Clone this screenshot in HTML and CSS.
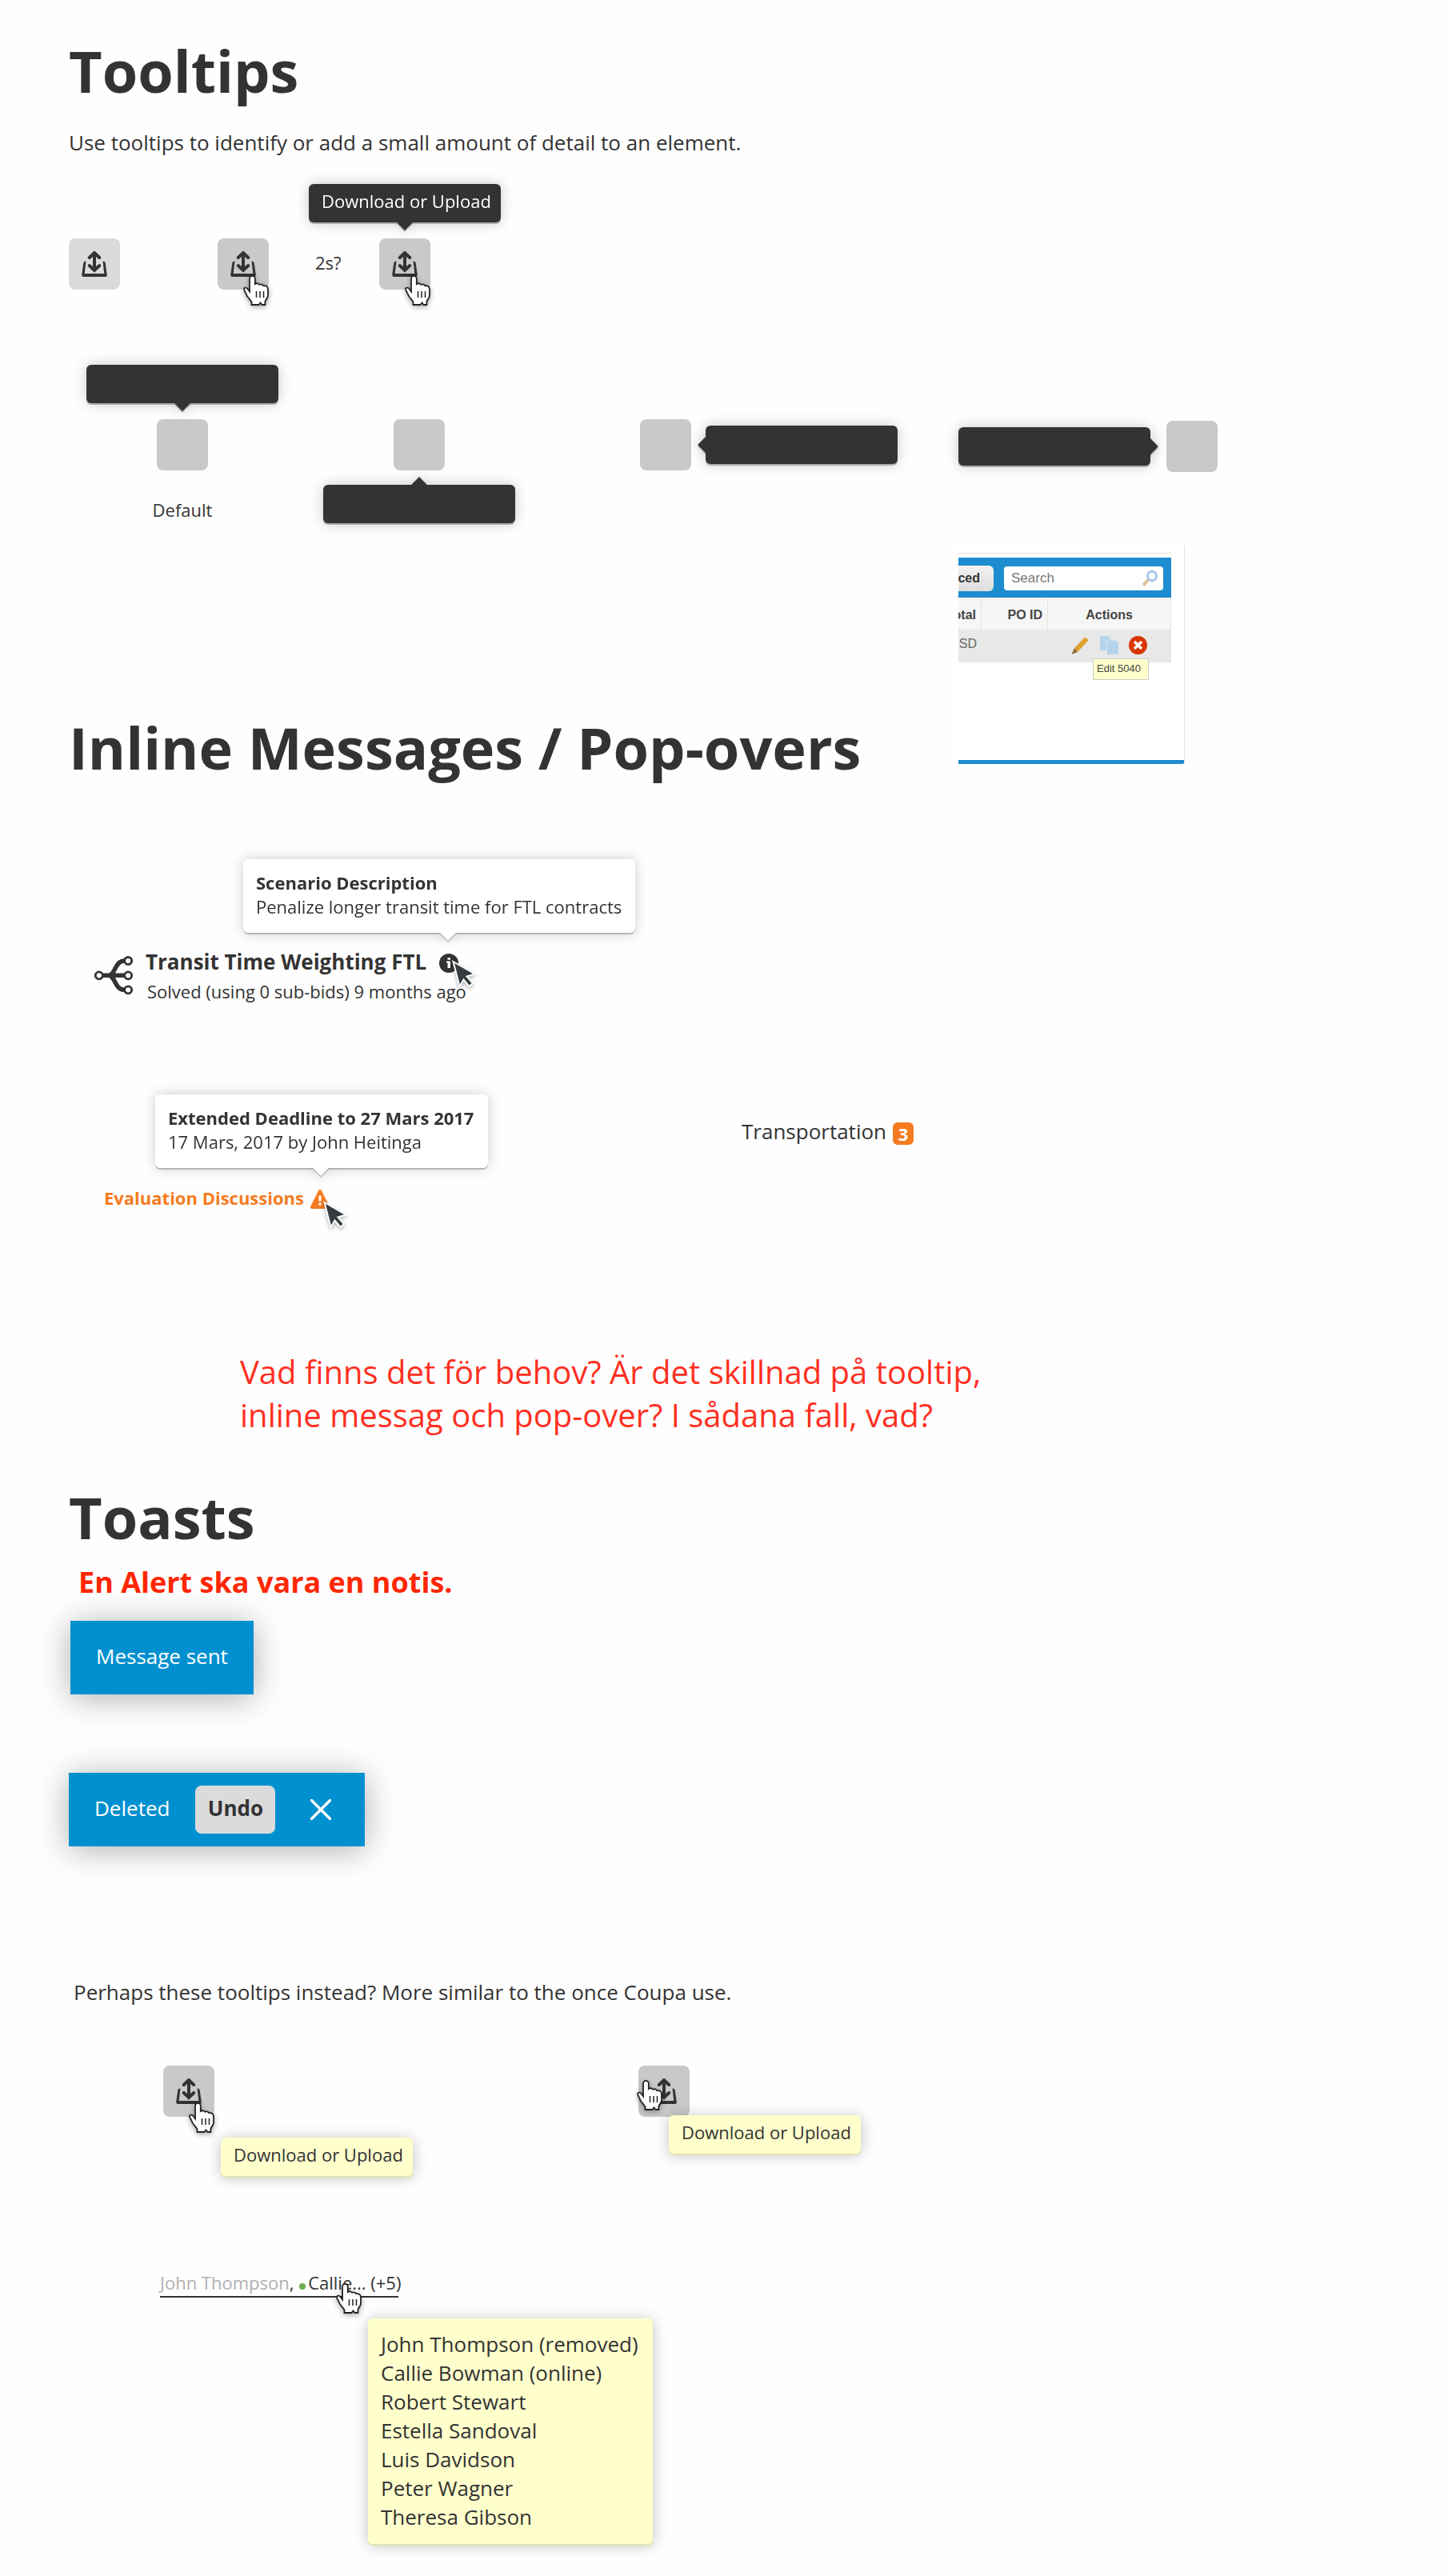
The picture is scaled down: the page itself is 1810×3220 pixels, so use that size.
FILE: index.html
```html
<!DOCTYPE html>
<html lang="en">
<head>
<meta charset="utf-8">
<meta name="viewport" content="width=device-width, initial-scale=1">
<title>Tooltips, pop-overs and toasts</title>
<link rel="stylesheet" href="styles.css">
</head>
<body>
<svg class="sprite" aria-hidden="true">
  <symbol id="transfer" viewBox="0 0 32 32">
    <path d="M16 3V24M9.800 8L16 2L22.200 8M9.800 18L16 24L22.200 18" fill="none" stroke="#333" stroke-width="4" stroke-linecap="round"/>
    <path d="M5.500 12.500C3.200 12.500 2.400 13.500 2.100 16L.2 29.500Q0 32 2.600 32H29.400Q32 32 31.800 29.500L29.900 16C29.600 13.500 28.800 12.500 26.500 12.500L28.300 28H3.700Z" fill="#333"/>
  </symbol>
  <symbol id="hand" viewBox="0 0 32 38">
    <path d="M8 4.300a3.400 3.400 0 0 1 6.800 0V11c2-1.300 4.500-.8 5.400 .8c2-.9 4-.2 5 1.400c3-.5 5.600 .8 5.800 4V25.500c0 3-3.600 5.500-3.600 8V37H23.500L21.500 34.500L19.500 37H10.500V33.500C8.500 29.500 5 28 3.500 23C2.500 20.500 1 19.500 1 17.500C1 15.300 4 15 5.500 17L8 20.500Z" fill="#fff" stroke="#222" stroke-width="1.800"/>
    <path d="M16.500 20v8M21 20v8M25.500 20v8" stroke="#222" stroke-width="1.500"/>
  </symbol>
  <symbol id="arrow" viewBox="0 0 32 36">
    <path d="M1.500 2L28.500 17.500L18.500 20.500L26 29L21.500 33L14.500 24.500L9.500 33Z" fill="#353c40" stroke="#fff" stroke-width="2"/>
  </symbol>
</svg>

<div class="page">
  <main class="guide">
    <h1>Tooltips</h1>
    <p class="lead">Use tooltips to identify or add a small amount of detail to an element.</p>

    <div class="sequence">
      <button class="icon-button" type="button" aria-label="Download or Upload"><svg class="glyph"><use href="#transfer"/></svg></button>
      <div class="anchor">
        <button class="icon-button is-hover" type="button" aria-label="Download or Upload"><svg class="glyph"><use href="#transfer"/></svg></button>
        <svg class="hand"><use href="#hand"/></svg>
      </div>
      <span class="small delay">2s?</span>
      <div class="anchor">
        <button class="icon-button is-hover" type="button" aria-label="Download or Upload"><svg class="glyph"><use href="#transfer"/></svg></button>
        <svg class="hand"><use href="#hand"/></svg>
        <div class="tooltip point-down over" role="tooltip">Download or Upload</div>
      </div>
    </div>

    <div class="placements">
      <div class="placement">
        <div class="tooltip point-down"></div>
        <div class="target"></div>
        <span class="small">Default</span>
      </div>
      <div class="placement below">
        <div class="target"></div>
        <div class="tooltip point-up"></div>
      </div>
      <div class="placement beside">
        <div class="target"></div>
        <div class="tooltip point-left"></div>
      </div>
    </div>

    <h1 class="inline-title">Inline Messages / Pop-overs</h1>

    <div class="popover scenario-popover">
      <strong>Scenario Description</strong>
      <span>Penalize longer transit time for FTL contracts</span>
    </div>
    <div class="scenario">
      <svg class="branch" viewBox="0 0 48 48" fill="none" stroke="#333" aria-hidden="true">
        <path d="M10 24.300H38M18 24.300C27 23 25 6 38 6M18 24.300C27 26 25 42.300 38 42.300" stroke-width="5.600"/>
        <g fill="#fff" stroke-width="2.800"><circle cx="5.800" cy="24.300" r="4.500"/><circle cx="42.200" cy="6" r="4.500"/><circle cx="42.200" cy="24.300" r="4.500"/><circle cx="42.200" cy="42.300" r="4.500"/></g>
      </svg>
      <div class="scenario-text">
        <div class="scenario-title">
          <strong>Transit Time Weighting FTL</strong>
          <span class="hint hint-info">
            <svg viewBox="0 0 24 24" aria-hidden="true"><circle cx="12" cy="12" r="12" fill="#333"/><path d="M10.500 5H14V7.800H10.500ZM9 9.500H14V18H10.500V11.500H9Z" fill="#fff"/></svg>
            <svg class="arrow"><use href="#arrow"/></svg>
          </span>
        </div>
        <span class="small">Solved (using 0 sub-bids) 9 months ago</span>
      </div>
    </div>

    <div class="notices">
      <div>
        <div class="popover deadline-popover">
          <strong>Extended Deadline to 27 Mars 2017</strong>
          <span>17 Mars, 2017 by John Heitinga</span>
        </div>
        <div class="status">
          <strong>Evaluation Discussions</strong>
          <span class="hint hint-warning">
            <svg viewBox="0 0 24 24" aria-hidden="true"><path d="M12 2L22 22H2Z" fill="#f47b20" stroke="#f47b20" stroke-width="4" stroke-linejoin="round"/><path d="M12 7.500V14.500M12 16.500V19.500" stroke="#fff" stroke-width="3"/></svg>
            <svg class="arrow"><use href="#arrow"/></svg>
          </span>
        </div>
      </div>
      <div class="category">Transportation <span class="count">3</span></div>
    </div>

    <p class="question" lang="sv">Vad finns det för behov? Är det skillnad på tooltip,<br>inline messag och pop-over? I sådana fall, vad?</p>

    <h1 class="toast-title">Toasts</h1>
    <p class="remark" lang="sv">En Alert ska vara en notis.</p>
    <div class="toast toast-sent" role="status">Message sent</div>
    <div class="toast toast-deleted" role="status">
      <span>Deleted</span>
      <button class="undo" type="button">Undo</button>
      <button class="close" type="button" aria-label="Close"><svg viewBox="0 0 26 26"><path d="M1.500 1.500L24.500 24.500M24.500 1.500L1.500 24.500" stroke="#fff" stroke-width="3.400" stroke-linecap="round"/></svg></button>
    </div>

    <p class="alternative">Perhaps these tooltips instead? More similar to the once Coupa use.</p>
    <div class="alternatives">
      <div class="anchor">
        <button class="icon-button is-hover" type="button" aria-label="Download or Upload"><svg class="glyph"><use href="#transfer"/></svg></button>
        <svg class="hand"><use href="#hand"/></svg>
        <div class="tooltip note note-far" role="tooltip">Download or Upload</div>
      </div>
      <div class="anchor">
        <button class="icon-button is-hover" type="button" aria-label="Download or Upload"><svg class="glyph"><use href="#transfer"/></svg></button>
        <svg class="hand hand-left"><use href="#hand"/></svg>
        <div class="tooltip note note-near" role="tooltip">Download or Upload</div>
      </div>
    </div>

    <div class="recipients"><span><span class="removed">John Thompson</span>, <i class="online"></i>Callie... (+5)</span>
      <svg class="hand hand-text"><use href="#hand"/></svg>
    </div>
    <ul class="people">
      <li>John Thompson (removed)</li>
      <li>Callie Bowman (online)</li>
      <li>Robert Stewart</li>
      <li>Estella Sandoval</li>
      <li>Luis Davidson</li>
      <li>Peter Wagner</li>
      <li>Theresa Gibson</li>
    </ul>
  </main>

  <aside class="side">
    <div class="placement before">
      <div class="tooltip point-right"></div>
      <div class="target"></div>
    </div>
    <div class="legacy">
      <div class="legacy-bar">
        <button class="advanced" type="button">Advanced</button>
        <div class="search">
          <input type="text" placeholder="Search" aria-label="Search">
          <svg viewBox="0 0 20 20" aria-hidden="true"><path d="M8 12L2 18.500" stroke="#e6bd93" stroke-width="4"/><circle cx="13" cy="7" r="5.700" fill="#f4f8ff" stroke="#9dbbe6" stroke-width="2.400"/></svg>
        </div>
      </div>
      <div class="legacy-body">
        <table>
          <thead><tr><th>Total</th><th>PO ID</th><th class="actions-head">Actions</th></tr></thead>
          <tbody><tr><td>USD</td><td></td><td>
            <div class="actions">
              <svg viewBox="0 0 23 23" aria-hidden="true"><path d="M4 15L17 1.500L22 5L8 20Z" fill="#e0a030"/><path d="M4 15L8 20L.5 23Z" fill="#8a6a3a"/></svg>
              <svg viewBox="0 0 23 23" aria-hidden="true"><path d="M0 0H11L14 4V18H0Z" fill="#b3d4ec"/><path d="M8.500 5H20L23.500 9V23.500H8.500Z" fill="#b3d4ec" stroke="#e8e8e8"/></svg>
              <svg viewBox="0 0 23 23" aria-hidden="true"><circle cx="11.500" cy="11.500" r="11.500" fill="#d93600"/><path d="M7 7L16 16M16 7L7 16" stroke="#fff" stroke-width="3.600"/></svg>
              <span class="edit-tip" role="tooltip">Edit 5040</span>
            </div>
          </td></tr></tbody>
        </table>
      </div>
    </div>
  </aside>
</div>
</body>
</html>
```
FILE: styles.css
```css
* { box-sizing: border-box; }
body {
  margin: 0;
  background: #fefefe;
  color: #333;
  font-family: "Open Sans", "Noto Sans", sans-serif;
  font-size: 26px;
  line-height: 36px;
}
svg { display: block; }
.sprite { position: absolute; width: 0; height: 0; }
button { border: 0; padding: 0; font: inherit; color: inherit; }
h1, p, ul { margin: 0; }
h1 { font-size: 72px; line-height: 98px; font-weight: 700; }
.small { font-size: 22px; line-height: 30px; }

.page {
  display: grid;
  grid-template-columns: minmax(0, 1112px) minmax(0, 1fr);
  align-items: start;
  padding: 39px 0 38px 86px;
}
.lead { margin-top: 23px; }

/* Icon buttons and pointers */
.icon-button {
  display: flex;
  align-items: center;
  justify-content: center;
  width: 64px;
  height: 64px;
  border-radius: 8px;
  background: #dbdbdb;
}
.icon-button.is-hover { background: #c9c9c9; }
.glyph { width: 32px; height: 32px; }
.anchor { position: relative; width: 64px; }
.hand {
  position: absolute;
  left: 32px;
  top: 46px;
  width: 32px;
  height: 38px;
  overflow: visible;
  filter: drop-shadow(0 2px 3px rgba(0, 0, 0, .35));
}
.hand-left { left: -2px; top: 18px; }
.arrow {
  position: absolute;
  left: 16px;
  top: 8px;
  width: 32px;
  height: 36px;
  overflow: visible;
  filter: drop-shadow(0 2px 2px rgba(0, 0, 0, .3));
}

/* Tooltips */
.tooltip {
  position: relative;
  width: 240px;
  height: 48px;
  padding: 6px 0 12px 16px;
  border-radius: 6px;
  background: #333;
  color: #fff;
  font-size: 22px;
  line-height: 30px;
  white-space: nowrap;
  filter: drop-shadow(0 2px 0 rgba(0, 0, 0, .25)) drop-shadow(0 0 8px rgba(0, 0, 0, .22));
}
.tooltip.over { position: absolute; left: -88px; top: -68px; }
.tooltip[class*="point-"]::after,
.popover::after {
  content: "";
  position: absolute;
  width: 14px;
  height: 14px;
  background: inherit;
  transform: rotate(45deg);
}
.point-down::after { left: 113px; bottom: -7px; }
.point-up::after { left: 113px; top: -7px; }
.point-left::after { left: -7px; top: 17px; }
.point-right::after { right: -7px; top: 17px; }

.sequence {
  display: grid;
  grid-template-columns: 186px 122px 80px 64px;
  align-items: center;
  margin-top: 102px;
}
.delay { padding-bottom: 4px; }
.placements {
  display: grid;
  grid-template-columns: 296px 396px 322px;
  align-items: start;
  margin: 94px 0 0 22px;
}
.placement { display: flex; flex-direction: column; align-items: center; gap: 20px; width: 240px; }
.placement .small { margin-top: 14px; }
.placement.below { margin-top: 68px; gap: 18px; }
.placement.beside { flex-direction: row; gap: 18px; margin-top: 68px; width: 322px; }
.placement.before { flex-direction: row; width: 324px; }
.target { width: 64px; height: 64px; border-radius: 8px; background: #c9c9c9; }

/* Pop-overs */
.inline-title { margin-top: 231px; }
.popover {
  position: relative;
  display: flex;
  flex-direction: column;
  height: 92px;
  padding: 14px 16px 18px;
  border-radius: 6px;
  background: #fff;
  font-size: 22px;
  line-height: 30px;
  white-space: nowrap;
  filter: drop-shadow(0 2px 0 rgba(0, 0, 0, .22)) drop-shadow(0 0 8px rgba(0, 0, 0, .2));
}
.popover::after { bottom: -7px; }
.scenario-popover { width: 490px; margin: 91px 0 0 218px; }
.scenario-popover::after { left: 249px; }
.deadline-popover { width: 416px; margin-left: 108px; }
.deadline-popover::after { left: 200px; }
.scenario {
  display: flex;
  align-items: center;
  gap: 16px;
  margin-top: 18px;
  padding-left: 32px;
}
.branch { width: 48px; height: 48px; }
.scenario-text { display: flex; flex-direction: column; gap: 4px; }
.scenario-text > .small { padding-left: 2px; }
.scenario-title { display: flex; align-items: center; gap: 16px; }
.hint { position: relative; width: 24px; height: 24px; }
.hint-info { margin-top: 4px; }
.hint-warning { margin-top: 4px; }
.hint-warning .arrow { top: 14px; }
.notices {
  display: grid;
  grid-template-columns: 841px auto;
  align-items: start;
  margin-top: 114px;
}
.status {
  display: flex;
  align-items: center;
  gap: 8px;
  margin-top: 22px;
  padding-left: 44px;
  color: #f47b20;
  font-size: 22px;
  line-height: 30px;
}
.category { display: flex; align-items: center; gap: 8px; margin-top: 28px; }
.count {
  width: 26px;
  height: 28px;
  margin-top: 6px;
  border-radius: 6px;
  background: #f47b20;
  color: #fff;
  font-size: 22px;
  line-height: 28px;
  font-weight: 700;
  text-align: center;
}
.question {
  margin: 176px 0 0 214px;
  color: #ff2f1f;
  font-size: 40px;
  line-height: 54px;
  white-space: nowrap;
}

/* Toasts */
.toast-title { margin-top: 51px; }
.remark {
  margin: 9px 0 0 12px;
  color: #ff2600;
  font-size: 36px;
  line-height: 48px;
  font-weight: 700;
}
.toast {
  display: flex;
  align-items: center;
  width: max-content;
  height: 92px;
  padding: 0 32px 4px;
  background: #0090d0;
  color: #fff;
  box-shadow: 0 4px 40px rgba(0, 0, 0, .32);
}
.toast-sent { margin: 24px 0 0 2px; }
.toast-deleted { margin-top: 98px; padding-bottom: 0; }
.toast-deleted span { padding-bottom: 4px; }
.undo {
  width: 100px;
  height: 60px;
  margin: 0 44px 0 32px;
  padding-bottom: 4px;
  border-radius: 8px;
  background: #dbdbdb;
  color: #333;
  font-weight: 700;
}
.close { width: 26px; height: 26px; margin-right: 10px; background: none; }

/* Yellow notes */
.alternative { margin: 164px 0 0 6px; }
.alternatives { display: grid; grid-template-columns: 594px 64px; margin: 74px 0 0 118px; }
.tooltip.note {
  position: absolute;
  background: #ffffcc;
  color: #333;
  filter: none;
  box-shadow: 0 2px 0 #e3e3b5, 0 2px 18px rgba(0, 0, 0, .25);
}
.tooltip.note-far { left: 72px; top: 90px; }
.tooltip.note-near { left: 38px; top: 62px; }
.recipients {
  position: relative;
  width: 298px;
  margin: 192px 0 0 114px;
  padding-bottom: 2px;
  border-bottom: 2px solid #333;
  font-size: 22px;
  line-height: 30px;
  white-space: nowrap;
}
.removed { color: #b0b0b0; }
.online {
  display: inline-block;
  width: 8px;
  height: 8px;
  margin: 0 3px 0 1px;
  border-radius: 50%;
  background: #6ab04c;
}
.hand-text { left: 220px; top: 16px; }
.people {
  width: 356px;
  margin: 26px 0 0 374px;
  padding: 14px 16px 16px;
  border-radius: 6px;
  background: #ffffcc;
  box-shadow: 0 2px 0 #e3e3b5, 0 2px 18px rgba(0, 0, 0, .25);
  list-style: none;
}

/* Legacy application excerpt */
.side { padding-top: 487px; }
.legacy {
  width: 283px;
  height: 273px;
  margin-top: 92px;
  padding: 9px 16px 0 0;
  overflow: hidden;
  border-right: 1px solid #e2e2e2;
  border-bottom: 5px solid #1e8dd0;
  border-bottom-right-radius: 4px;
  background: #fff;
  font-family: "Liberation Sans", Arial, sans-serif;
  font-size: 16px;
  line-height: 20px;
}
.legacy-bar {
  position: relative;
  display: flex;
  justify-content: flex-end;
  align-items: center;
  gap: 13px;
  height: 56px;
  padding: 6px 10px 0 0;
  border-top: 1px solid #ddd;
  background: linear-gradient(#fff 5px, #1e8dd0 5px);
}
.advanced {
  flex: none;
  height: 32px;
  padding: 0 17px;
  border-radius: 6px;
  background: linear-gradient(#f2f2f2, #dedede);
  font-weight: 700;
}
.search {
  display: flex;
  flex: none;
  align-items: center;
  width: 199px;
  height: 30px;
  padding: 0 7px 0 9px;
  border-radius: 4px;
  background: #fff;
}
.search input {
  flex: 1;
  min-width: 0;
  border: 0;
  padding: 0;
  background: none;
  font: inherit;
  font-size: 17px;
}
.search input::placeholder { color: #777; }
.search svg { width: 20px; height: 20px; }
.legacy-body { display: flex; justify-content: flex-end; }
table { flex: none; width: 320px; table-layout: fixed; border-collapse: separate; border-spacing: 0; }
th {
  width: 82px;
  height: 40px;
  padding: 3px 6px 0;
  border-right: 1px solid #e4e4e4;
  background: #f6f6f6;
  color: #444;
  text-align: right;
}
.actions-head { width: 152px; text-align: center; }
td { height: 41px; padding: 0 6px 6px; background: #e8e8e8; color: #666; text-align: right; }
.actions { position: relative; display: flex; justify-content: flex-end; gap: 13px; padding: 4px 24px 0 0; }
.actions svg { width: 23px; height: 23px; }
.edit-tip {
  position: absolute;
  right: 22px;
  top: 32px;
  padding: 2px 9px 3px 4px;
  border: 1px solid #ccc;
  background: #ffffcc;
  color: #444;
  font-size: 13px;
  line-height: 20px;
}
```
